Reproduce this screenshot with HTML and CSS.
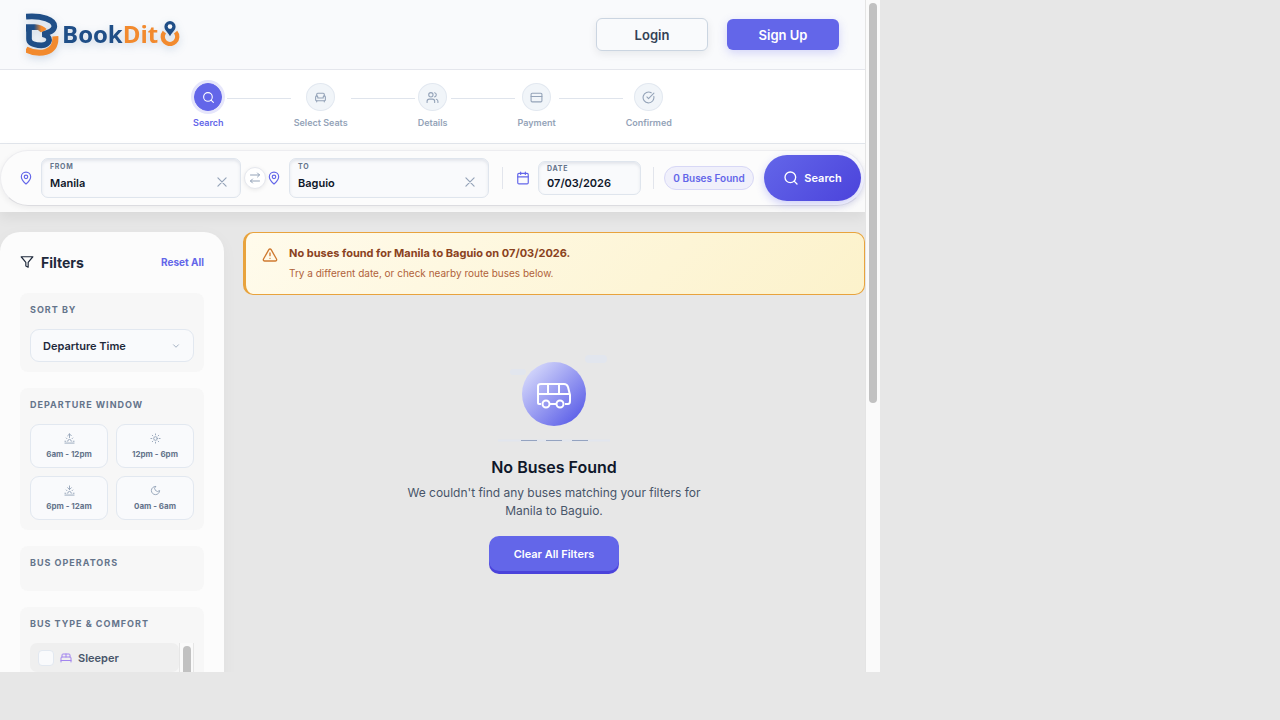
FILE: index.html
```html
<!DOCTYPE html>
<html lang="en">
<head>
  <meta charset="UTF-8" />
  <meta name="viewport" content="width=device-width, initial-scale=1.0"/>
  <title>BookDito - Bus Search</title>
  <link rel="stylesheet" href="styles.css">
</head>
<body>

<!-- shared icons -->
<svg class="sprite" aria-hidden="true">
  <symbol id="i-search" viewBox="0 0 24 24"><circle cx="11" cy="11" r="8"/><path d="m21 21-4.3-4.3"/></symbol>
  <symbol id="i-pin" viewBox="0 0 24 24"><path d="M20 10c0 5-5.500 10.200-7.400 11.800a1 1 0 0 1-1.200 0C9.500 20.200 4 15 4 10a8 8 0 0 1 16 0"/><circle cx="12" cy="10" r="3"/></symbol>
  <symbol id="i-x" viewBox="0 0 24 24"><path d="M19 5 5 19M5 5l14 14"/></symbol>
  <symbol id="i-sofa" viewBox="0 0 24 24"><path d="M19 9V6a2 2 0 0 0-2-2H7a2 2 0 0 0-2 2v3"/><path d="M3 16a2 2 0 0 0 2 2h14a2 2 0 0 0 2-2v-5a2 2 0 0 0-4 0v2H7v-2a2 2 0 0 0-4 0z"/><path d="M5 18v2M19 18v2"/></symbol>
  <symbol id="i-users" viewBox="0 0 24 24"><path d="M16 21v-2a4 4 0 0 0-4-4H6a4 4 0 0 0-4 4v2"/><circle cx="9" cy="7" r="4"/><path d="M22 21v-2a4 4 0 0 0-3-3.870M16 3.130a4 4 0 0 1 0 7.750"/></symbol>
  <symbol id="i-card" viewBox="0 0 24 24"><rect x="2" y="4" width="20" height="16" rx="2"/><path d="M2 10h20"/></symbol>
  <symbol id="i-check" viewBox="0 0 24 24"><path d="M21.800 10A10 10 0 1 1 17 3.340"/><path d="m9 11 3 3L22 4"/></symbol>
  <symbol id="i-swap" viewBox="0 0 24 24"><path d="m17 2 4 4-4 4M3 6h18M7 22l-4-4 4-4M21 18H3"/></symbol>
  <symbol id="i-calendar" viewBox="0 0 24 24"><rect x="3" y="4" width="18" height="18" rx="2"/><path d="M8 2v4M16 2v4M3 10h18"/></symbol>
  <symbol id="i-filter" viewBox="0 0 24 24"><path d="M22 3H2l8 9.460V19l4 2v-8.540z"/></symbol>
  <symbol id="i-chevron" viewBox="0 0 24 24"><path d="m6 9 6 6 6-6"/></symbol>
  <symbol id="i-sunrise" viewBox="0 0 24 24"><path d="M12 2v8M8 6l4-4 4 4M4.930 10.930l1.410 1.410M2 18h2M20 18h2M19.070 10.930l-1.410 1.410M22 22H2M16 18a4 4 0 0 0-8 0"/></symbol>
  <symbol id="i-sunset" viewBox="0 0 24 24"><path d="M12 10V2M16 6l-4 4-4-4M4.930 10.930l1.410 1.410M2 18h2M20 18h2M19.070 10.930l-1.410 1.410M22 22H2M16 18a4 4 0 0 0-8 0"/></symbol>
  <symbol id="i-sun" viewBox="0 0 24 24"><circle cx="12" cy="12" r="4"/><path d="M12 2v2M12 20v2M4.930 4.930l1.410 1.410M17.660 17.660l1.410 1.410M2 12h2M20 12h2M6.340 17.660l-1.410 1.410M19.070 4.930l-1.410 1.410"/></symbol>
  <symbol id="i-moon" viewBox="0 0 24 24"><path d="M12 3a6 6 0 0 0 9 9 9 9 0 1 1-9-9z"/></symbol>
  <symbol id="i-bed" viewBox="0 0 24 24"><path d="M2 20v-8a2 2 0 0 1 2-2h16a2 2 0 0 1 2 2v8M4 10V6a2 2 0 0 1 2-2h12a2 2 0 0 1 2 2v4M12 4v6M2 17h20"/></symbol>
  <symbol id="i-warn" viewBox="0 0 24 24"><path d="m21.730 18-8-14a2 2 0 0 0-3.480 0l-8 14A2 2 0 0 0 4 21h16a2 2 0 0 0 1.730-3zM12 9v4M12 17h.010"/></symbol>
</svg>

<div class="app">
  <div class="page">
    <header class="header">
      <a href="#" class="logo" aria-label="BookDito">
        <svg class="logo-mark" viewBox="0 0 99 132">
          <defs>
            <linearGradient id="fade" gradientUnits="userSpaceOnUse" x1="24" y1="0" x2="46" y2="0">
              <stop offset="0" stop-color="#1f4e87"/><stop offset="1" stop-color="#f28a2e"/>
            </linearGradient>
          </defs>
          <path d="M0 109C38 128 92 123 88 70" fill="none" stroke="#f28a2e" stroke-width="18"/>
          <path d="M0 11C48 7 85 20 85 40C85 52 72 58 50 64C80 70 72 97 46 97C20 96 9 90 9 78V36" fill="none" stroke="#1f4e87" stroke-width="17"/>
          <path d="M0 34H27Q50 36 62 48Q56 55 44 58L36 51H17L0 56Z" fill="url(#fade)"/>
        </svg>
        <span class="logo-book">Book</span><span class="logo-dit">Dit</span>
        <svg class="logo-pin" viewBox="0 0 60 76">
          <path d="M13 34A22 22 0 1 0 47 34" fill="none" stroke="#f28a2e" stroke-width="13"/>
          <path d="M30 46C22 33 13 28 13 17a17 17 0 0 1 34 0C47 28 38 33 30 46z" fill="#1f4e87"/>
          <circle cx="30" cy="17" r="7" fill="#f9fafd"/>
        </svg>
      </a>
      <div class="auth">
        <button type="button" class="btn-login">Login</button>
        <button type="button" class="btn-signup">Sign Up</button>
      </div>
    </header>

    <nav class="steps" aria-label="Booking progress">
      <div class="step active"><span class="dot"><svg class="icon"><use href="#i-search"/></svg></span>Search</div>
      <i class="line"></i>
      <div class="step"><span class="dot"><svg class="icon"><use href="#i-sofa"/></svg></span>Select Seats</div>
      <i class="line"></i>
      <div class="step"><span class="dot"><svg class="icon"><use href="#i-users"/></svg></span>Details</div>
      <i class="line"></i>
      <div class="step"><span class="dot"><svg class="icon"><use href="#i-card"/></svg></span>Payment</div>
      <i class="line"></i>
      <div class="step"><span class="dot"><svg class="icon"><use href="#i-check"/></svg></span>Confirmed</div>
    </nav>

    <div class="search-wrap">
      <form class="search-bar">
        <svg class="icon lead"><use href="#i-pin"/></svg>
        <div class="field">
          <div class="field-text">
            <label for="from">From</label>
            <input type="text" id="from" value="Manila">
          </div>
          <button type="button" class="clear" aria-label="Clear from"><svg class="icon"><use href="#i-x"/></svg></button>
        </div>
        <button type="button" class="swap" aria-label="Swap"><svg class="icon"><use href="#i-swap"/></svg></button>
        <svg class="icon lead"><use href="#i-pin"/></svg>
        <div class="field">
          <div class="field-text">
            <label for="to">To</label>
            <input type="text" id="to" value="Baguio">
          </div>
          <button type="button" class="clear" aria-label="Clear to"><svg class="icon"><use href="#i-x"/></svg></button>
        </div>
        <i class="divider"></i>
        <svg class="icon lead"><use href="#i-calendar"/></svg>
        <div class="field date">
          <div class="field-text">
            <label for="date">Date</label>
            <input type="text" id="date" value="07/03/2026">
          </div>
        </div>
        <i class="divider"></i>
        <span class="count">0 Buses Found</span>
        <button type="submit" class="btn-search"><svg class="icon"><use href="#i-search"/></svg>Search</button>
      </form>
    </div>

    <div class="content">
      <aside class="sidebar">
        <div class="sidebar-head">
          <h2><svg class="icon"><use href="#i-filter"/></svg>Filters</h2>
          <button type="button" class="reset">Reset All</button>
        </div>

        <section class="card">
          <label class="card-title" for="sort">Sort by</label>
          <div class="select">
            <select id="sort"><option>Departure Time</option><option>Price</option></select>
            <svg class="icon"><use href="#i-chevron"/></svg>
          </div>
        </section>

        <section class="card">
          <h3 class="card-title">Departure window</h3>
          <div class="windows">
            <button type="button"><svg class="icon"><use href="#i-sunrise"/></svg>6am - 12pm</button>
            <button type="button"><svg class="icon"><use href="#i-sun"/></svg>12pm - 6pm</button>
            <button type="button"><svg class="icon"><use href="#i-sunset"/></svg>6pm - 12am</button>
            <button type="button"><svg class="icon"><use href="#i-moon"/></svg>0am - 6am</button>
          </div>
        </section>

        <section class="card operators">
          <h3 class="card-title">Bus operators</h3>
        </section>

        <section class="card">
          <h3 class="card-title">Bus type &amp; comfort</h3>
          <div class="types">
            <label class="type"><input type="checkbox"><svg class="icon"><use href="#i-bed"/></svg>Sleeper</label>
            <div class="types-bar"><i></i></div>
          </div>
        </section>
      </aside>

      <main class="results">
        <div class="alert">
          <svg class="icon"><use href="#i-warn"/></svg>
          <div>
            <strong>No buses found for Manila to Baguio on 07/03/2026.</strong>
            <p>Try a different date, or check nearby route buses below.</p>
          </div>
        </div>

        <div class="empty">
          <svg class="empty-art" viewBox="0 0 112 90">
            <defs>
              <linearGradient id="orb" x1="0" y1="0" x2="1" y2="1">
                <stop offset="0.1" stop-color="#d6d9fb"/><stop offset="0.85" stop-color="#6366e9"/>
              </linearGradient>
            </defs>
            <rect x="12" y="14" width="16" height="6" rx="3" fill="#e2e6ee"/>
            <rect x="87" y="0" width="22" height="8" rx="4" fill="#e2e6ee"/>
            <circle cx="56" cy="39" r="32" fill="url(#orb)"/>
            <g fill="none" stroke="#fff" stroke-width="2" stroke-linejoin="round">
              <path d="M43 49H41Q40 49 40 48V31Q40 29 43 29H66Q69 29 70 32L72 40V46Q72 49 70 49H67M51 49H58M40 39H72M50 29V39M61 29V39"/>
              <circle cx="48" cy="49" r="3.500"/><circle cx="62" cy="49" r="3.500"/>
            </g>
            <path d="M0 85.500H112" stroke="#e2e6ee" stroke-width="2"/>
            <path d="M23 85.500H39M48 85.500H64M74 85.500H90" stroke="#94a3c0"/>
          </svg>
          <h1>No Buses Found</h1>
          <p>We couldn't find any buses matching your filters for Manila to Baguio.</p>
          <button type="button" class="btn-clear">Clear All Filters</button>
        </div>
      </main>
    </div>
  </div>

  <div class="scrollbar"><i class="thumb"></i></div>
</div>

</body>
</html>
```
FILE: styles.css
```css
* {
  box-sizing: border-box;
}

body {
  margin: 0;
  background: #e7e7e7;
  font-family: Inter, "Liberation Sans", sans-serif;
  color: #1e293b;
}

button,
input,
select {
  font-family: inherit;
  margin: 0;
}

button {
  padding: 0;
  border: none;
  background: none;
  cursor: pointer;
}

h1, h2, h3, p {
  margin: 0;
}

.sprite {
  display: none;
}

.icon {
  width: 14px;
  height: 14px;
  flex: none;
  fill: none;
  stroke: currentColor;
  stroke-width: 2;
  stroke-linecap: round;
  stroke-linejoin: round;
}

.app {
  display: flex;
  width: calc(100vw - 400px);
  height: calc(100vh - 48px);
  overflow: hidden;
}

.page {
  flex: 1;
  min-width: 0;
  overflow: hidden;
}

.scrollbar {
  width: 15px;
  padding: 3px;
  background: #fafafa;
  border-left: 1px solid #e4e4e4;
}

.thumb {
  display: block;
  width: 8px;
  height: 60%;
  border-radius: 4px;
  background: #c1c1c1;
}

/* header */
.header {
  display: flex;
  align-items: center;
  justify-content: space-between;
  height: 70px;
  padding: 0 26px;
  background: #f9fafc;
  border-bottom: 1px solid #e4e6ec;
}

.logo {
  display: flex;
  align-items: center;
  text-decoration: none;
  font: 700 24px/32px "Open Sans", sans-serif;
  filter: drop-shadow(0 3px 4px rgba(31, 78, 135, 0.2));
}

.logo-mark {
  width: 33px;
  height: 44px;
  margin-right: 3px;
}

.logo-book,
.logo-dit {
  padding-bottom: 2px;
}

.logo-book {
  color: #1f4e87;
}

.logo-dit {
  color: #f28a2e;
}

.logo-pin {
  width: 20px;
  height: 25px;
  margin: 0 0 2px 2px;
}

.auth {
  display: flex;
  align-items: center;
  gap: 19px;
}

.btn-login,
.btn-signup {
  width: 112px;
  height: 31px;
  border-radius: 6px;
  font-size: 13px;
  font-weight: 600;
}

.btn-login {
  height: 33px;
  color: #334155;
  background: #f9fafc;
  border: 1px solid #cbd5e1;
  box-shadow: 0 3px 8px rgba(15, 23, 42, 0.08);
}

.btn-signup {
  color: #fff;
  background: #6366e9;
  box-shadow: 0 3px 10px rgba(99, 102, 241, 0.25);
}

/* stepper */
.steps {
  display: flex;
  justify-content: center;
  gap: 3px;
  height: 74px;
  padding-top: 13px;
  background: #fff;
  border-bottom: 1px solid #e2e6ec;
}

.step {
  display: flex;
  flex-direction: column;
  align-items: center;
  gap: 6px;
  font-size: 9px;
  font-weight: 600;
  line-height: 12px;
  color: #94a3b8;
}

.dot {
  display: flex;
  align-items: center;
  justify-content: center;
  width: 29px;
  height: 28px;
  border-radius: 50%;
  border: 1px solid #e2e8f0;
  background: #f1f5f9;
}

.dot .icon {
  width: 13px;
  height: 13px;
}

.step.active {
  color: #6366e9;
}

.step.active .dot {
  width: 28px;
  color: #fff;
  background: #6366e9;
  border-color: #6366e9;
  box-shadow: 0 0 0 3px #e6e6fb;
}

.line {
  width: 64px;
  height: 1px;
  margin-top: 15px;
  background: #dfe4ec;
}

/* search bar */
.search-wrap {
  padding: 6px 0;
  background: #fafafa;
  box-shadow: 0 6px 12px rgba(0, 0, 0, 0.06);
}

.search-bar {
  display: flex;
  align-items: center;
  height: 56px;
  padding: 0 3px 0 18px;
  border-radius: 28px;
  border: 1px solid #ededf0;
  border-bottom-color: #dcdce0;
  background: #fcfcfc;
  box-shadow: 0 2px 6px rgba(0, 0, 0, 0.06);
}

.lead {
  color: #6366e9;
  margin-right: 8px;
}

.field {
  display: flex;
  align-items: center;
  flex: 1;
  min-width: 0;
  height: 40px;
  padding: 0 11px 0 8px;
  border: 1px solid #dfe5ed;
  border-radius: 7px;
  background: #f9fafc;
  box-shadow: inset 0 2px 3px rgba(100, 116, 139, 0.14);
}

.field-text {
  flex: 1;
  min-width: 0;
}

.field label {
  display: block;
  font-size: 7px;
  font-weight: 700;
  line-height: 9px;
  letter-spacing: 0.7px;
  text-transform: uppercase;
  color: #64748b;
}

.field input {
  display: block;
  width: 100%;
  height: 24px;
  padding: 0;
  border: none;
  outline: none;
  background: none;
  font-size: 11px;
  font-weight: 600;
  color: #0f172a;
}

.field.date {
  flex: none;
  width: 103px;
  height: 34px;
  padding-right: 8px;
}

.field.date input {
  height: 20px;
}

.clear {
  display: flex;
  padding-top: 8px;
  color: #94a3b8;
}

.clear .icon {
  stroke-width: 2;
}

.swap {
  display: flex;
  align-items: center;
  justify-content: center;
  flex: none;
  width: 22px;
  height: 22px;
  margin: 0 1px 0 3px;
  border: 1px solid #e6e8ee;
  border-radius: 50%;
  color: #94a3b8;
  background: #fff;
  box-shadow: 0 1px 4px rgba(0, 0, 0, 0.08);
}

.swap .icon {
  width: 12px;
  height: 12px;
}

.divider {
  width: 1px;
  height: 22px;
  margin: 0 13px;
  background: #e2e5ec;
}

.date + .divider {
  margin: 0 10px 0 12px;
}

.count {
  flex: none;
  width: 90px;
  margin-right: 10px;
  border: 1px solid #d8d8f6;
  border-radius: 12px;
  background: #f0f0fb;
  color: #6366e9;
  font-size: 10px;
  font-weight: 600;
  line-height: 22px;
  text-align: center;
}

.btn-search {
  display: flex;
  align-items: center;
  justify-content: center;
  gap: 5px;
  flex: none;
  width: 97px;
  height: 46px;
  border-radius: 23px;
  color: #fff;
  background: linear-gradient(135deg, #6366e9, #4b43db);
  box-shadow: 0 3px 8px rgba(99, 102, 241, 0.3);
  font-size: 11px;
  font-weight: 600;
}

.btn-search .icon {
  width: 16px;
  height: 16px;
}

/* content */
.content {
  display: flex;
  gap: 19px;
  padding-top: 20px;
}

.sidebar {
  flex: none;
  width: 224px;
  padding: 20px;
  border-radius: 20px;
  background: #fcfcfc;
  box-shadow: 0 4px 16px rgba(15, 23, 42, 0.04);
}

.sidebar-head {
  display: flex;
  align-items: center;
  justify-content: space-between;
  height: 20px;
  margin-bottom: 21px;
}

.sidebar-head h2 {
  display: flex;
  align-items: center;
  gap: 7px;
  font-size: 14px;
  font-weight: 700;
}

.reset {
  color: #6366e9;
  font-size: 10px;
  font-weight: 700;
}

.card {
  margin-bottom: 16px;
  padding: 10px;
  border-radius: 8px;
  background: #f7f7f7;
}

.card-title {
  display: block;
  margin-bottom: 12px;
  color: #64748b;
  font-size: 9px;
  font-weight: 700;
  line-height: 14px;
  letter-spacing: 1px;
  text-transform: uppercase;
}

.operators {
  height: 45px;
}

.select {
  position: relative;
}

.select select {
  display: block;
  width: 100%;
  height: 33px;
  padding: 0 12px;
  appearance: none;
  border: 1px solid #e2e8f0;
  border-radius: 9px;
  background: #f9fafc;
  color: #1e293b;
  font-size: 11px;
  font-weight: 600;
}

.select .icon {
  position: absolute;
  top: 12px;
  right: 13px;
  width: 10px;
  height: 10px;
  color: #94a3b8;
  pointer-events: none;
}

.windows {
  display: grid;
  grid-template-columns: 1fr 1fr;
  gap: 8px;
}

.windows button {
  display: flex;
  flex-direction: column;
  align-items: center;
  justify-content: center;
  gap: 4px;
  height: 44px;
  border: 1px solid #e2e8f0;
  border-radius: 9px;
  background: #f9fafc;
  color: #64748b;
  font-size: 8px;
  font-weight: 700;
  line-height: 12px;
}

.windows .icon {
  width: 11px;
  height: 11px;
  color: #94a3b8;
}

.types {
  display: flex;
  height: 120px;
}

.type {
  display: flex;
  align-items: center;
  gap: 6px;
  flex: 1;
  height: 29px;
  padding-left: 8px;
  border-radius: 7px;
  background: #efefef;
  color: #475569;
  font-size: 11px;
  font-weight: 600;
}

.type input {
  appearance: none;
  width: 16px;
  height: 16px;
  margin: 0;
  border: 1px solid #e2e8f0;
  border-radius: 4px;
  background: #f9fafc;
}

.type .icon {
  width: 12px;
  height: 12px;
  color: #a285ee;
}

.types-bar {
  width: 15px;
  padding: 3px;
  border-left: 1px solid #e6e6e6;
  border-right: 1px solid #e6e6e6;
  background: #fafafa;
}

.types-bar i {
  display: block;
  width: 8px;
  height: 60px;
  border-radius: 4px;
  background: #c1c1c1;
}

.results {
  flex: 1;
  min-width: 0;
}

.alert {
  display: flex;
  gap: 11px;
  height: 63px;
  padding: 13px 16px;
  border: 1px solid #e8a33d;
  border-left-width: 3px;
  border-radius: 10px;
  background: linear-gradient(135deg, #fffbec, #fcf2cb);
}

.alert .icon {
  width: 16px;
  height: 16px;
  margin-top: 1px;
  color: #cf7a30;
}

.alert strong {
  display: block;
  margin-bottom: 5px;
  color: #8a4220;
  font-size: 11px;
  font-weight: 700;
  line-height: 14px;
}

.alert p {
  color: #b0623a;
  font-size: 10px;
  line-height: 16px;
}

.empty {
  display: flex;
  flex-direction: column;
  align-items: center;
  padding-top: 60px;
  text-align: center;
}

.empty-art {
  width: 112px;
  height: 90px;
}

.empty h1 {
  margin: 12px 0 7px;
  color: #0f172a;
  font-size: 16px;
  font-weight: 600;
  line-height: 20px;
}

.empty p {
  max-width: 300px;
  margin-bottom: 16px;
  color: #475569;
  font-size: 12px;
  line-height: 18px;
}

.btn-clear {
  width: 130px;
  height: 35px;
  border-radius: 10px;
  color: #fff;
  background: #6366e9;
  box-shadow: 0 3px 0 #4b43db;
  font-size: 11px;
  font-weight: 600;
}
```
